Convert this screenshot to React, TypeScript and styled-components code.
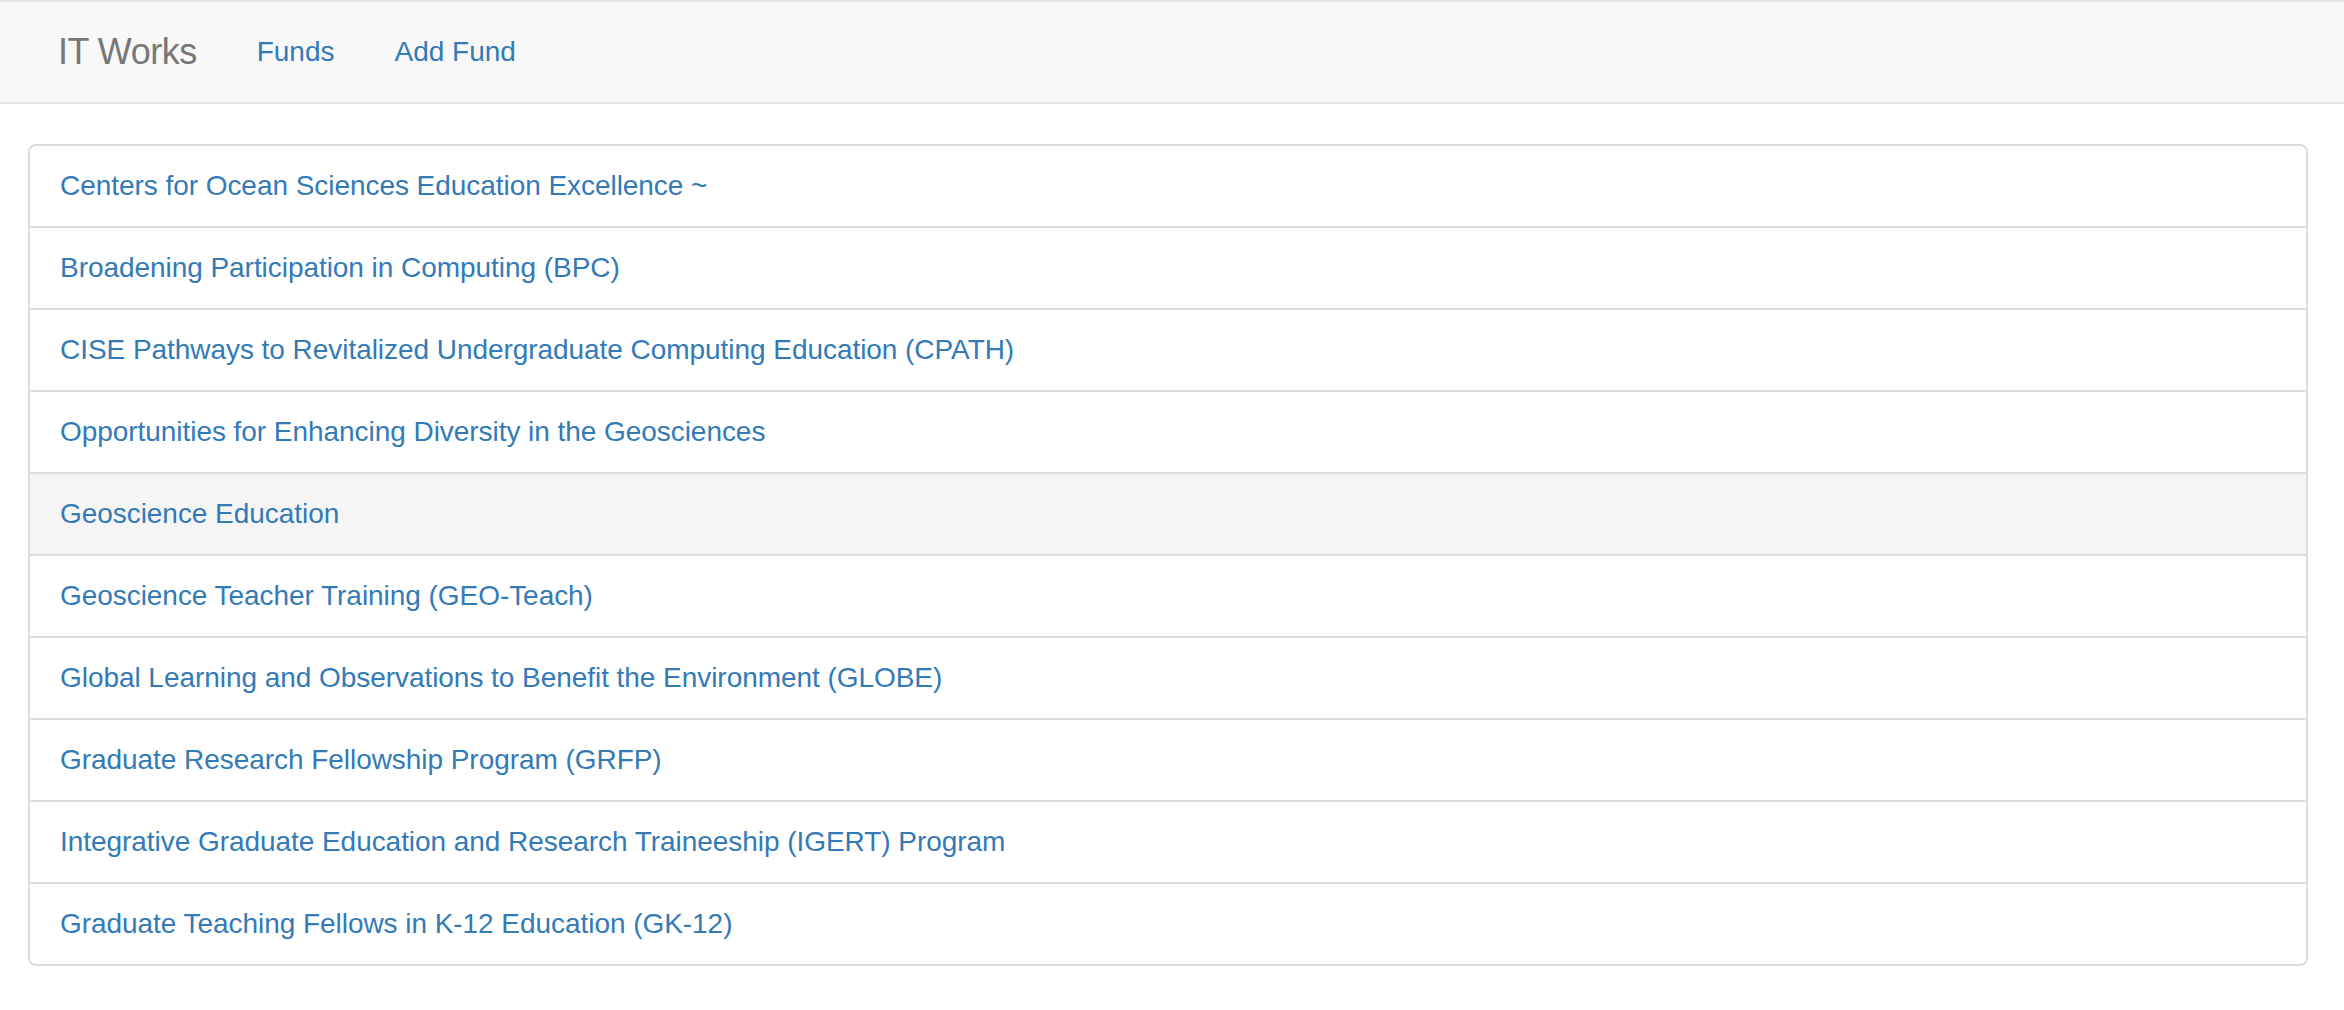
import React from "react";
import styled, { createGlobalStyle } from "styled-components";

const GlobalStyle = createGlobalStyle`
  html, body {
    margin: 0;
    padding: 0;
    background: #ffffff;
  }
  body {
    font-family: "Liberation Sans", Arial, Helvetica, sans-serif;
    font-size: 28px;
    line-height: 40px;
    color: #333333;
  }
  * { box-sizing: border-box; }
`;

const Navbar = styled.nav`
  background: #f8f8f8;
  border-top: 2px solid #e7e7e7;
  border-bottom: 2px solid #e7e7e7;
  min-height: 104px;
  margin-bottom: 40px;
`;

const NavContainer = styled.div`
  display: flex;
  align-items: center;
  padding: 0 36px 0 28px;
  height: 100px;
`;

const Brand = styled.a`
  display: block;
  padding: 30px;
  height: 100px;
  font-size: 36px;
  line-height: 40px;
  letter-spacing: -0.5px;
  color: #777777;
  text-decoration: none;
`;

const NavList = styled.ul`
  display: flex;
  list-style: none;
  margin: 0;
  padding: 0;
`;

const NavLink = styled.a`
  display: block;
  padding: 30px;
  font-size: 28px;
  line-height: 40px;
  color: #337ab7;
  text-decoration: none;
`;

const Container = styled.main`
  padding: 0 36px 0 28px;
`;

const ListGroup = styled.div`
  display: flex;
  flex-direction: column;
  margin-bottom: 40px;
`;

const ListItem = styled.a<{ $hover?: boolean }>`
  display: block;
  padding: 20px 30px;
  margin-bottom: -2px;
  border: 2px solid #dddddd;
  background: ${(p) => (p.$hover ? "#f5f5f5" : "#ffffff")};
  color: #337ab7;
  font-size: 28px;
  line-height: 40px;
  letter-spacing: -0.05px;
  text-decoration: none;

  &:first-child {
    border-top-left-radius: 8px;
    border-top-right-radius: 8px;
  }
  &:last-child {
    margin-bottom: 0;
    border-bottom-left-radius: 8px;
    border-bottom-right-radius: 8px;
  }
`;

const funds = [
  "Centers for Ocean Sciences Education Excellence ~",
  "Broadening Participation in Computing (BPC)",
  "CISE Pathways to Revitalized Undergraduate Computing Education (CPATH)",
  "Opportunities for Enhancing Diversity in the Geosciences",
  "Geoscience Education",
  "Geoscience Teacher Training (GEO-Teach)",
  "Global Learning and Observations to Benefit the Environment (GLOBE)",
  "Graduate Research Fellowship Program (GRFP)",
  "Integrative Graduate Education and Research Traineeship (IGERT) Program",
  "Graduate Teaching Fellows in K-12 Education (GK-12)",
];

export default function App() {
  return (
    <>
      <GlobalStyle />
      <Navbar>
        <NavContainer>
          <Brand href="#">IT Works</Brand>
          <NavList>
            <li>
              <NavLink href="#">Funds</NavLink>
            </li>
            <li>
              <NavLink href="#">Add Fund</NavLink>
            </li>
          </NavList>
        </NavContainer>
      </Navbar>
      <Container>
        <ListGroup>
          {funds.map((f, i) => (
            <ListItem key={f} href="#" $hover={i === 4}>
              {f}
            </ListItem>
          ))}
        </ListGroup>
      </Container>
    </>
  );
}
